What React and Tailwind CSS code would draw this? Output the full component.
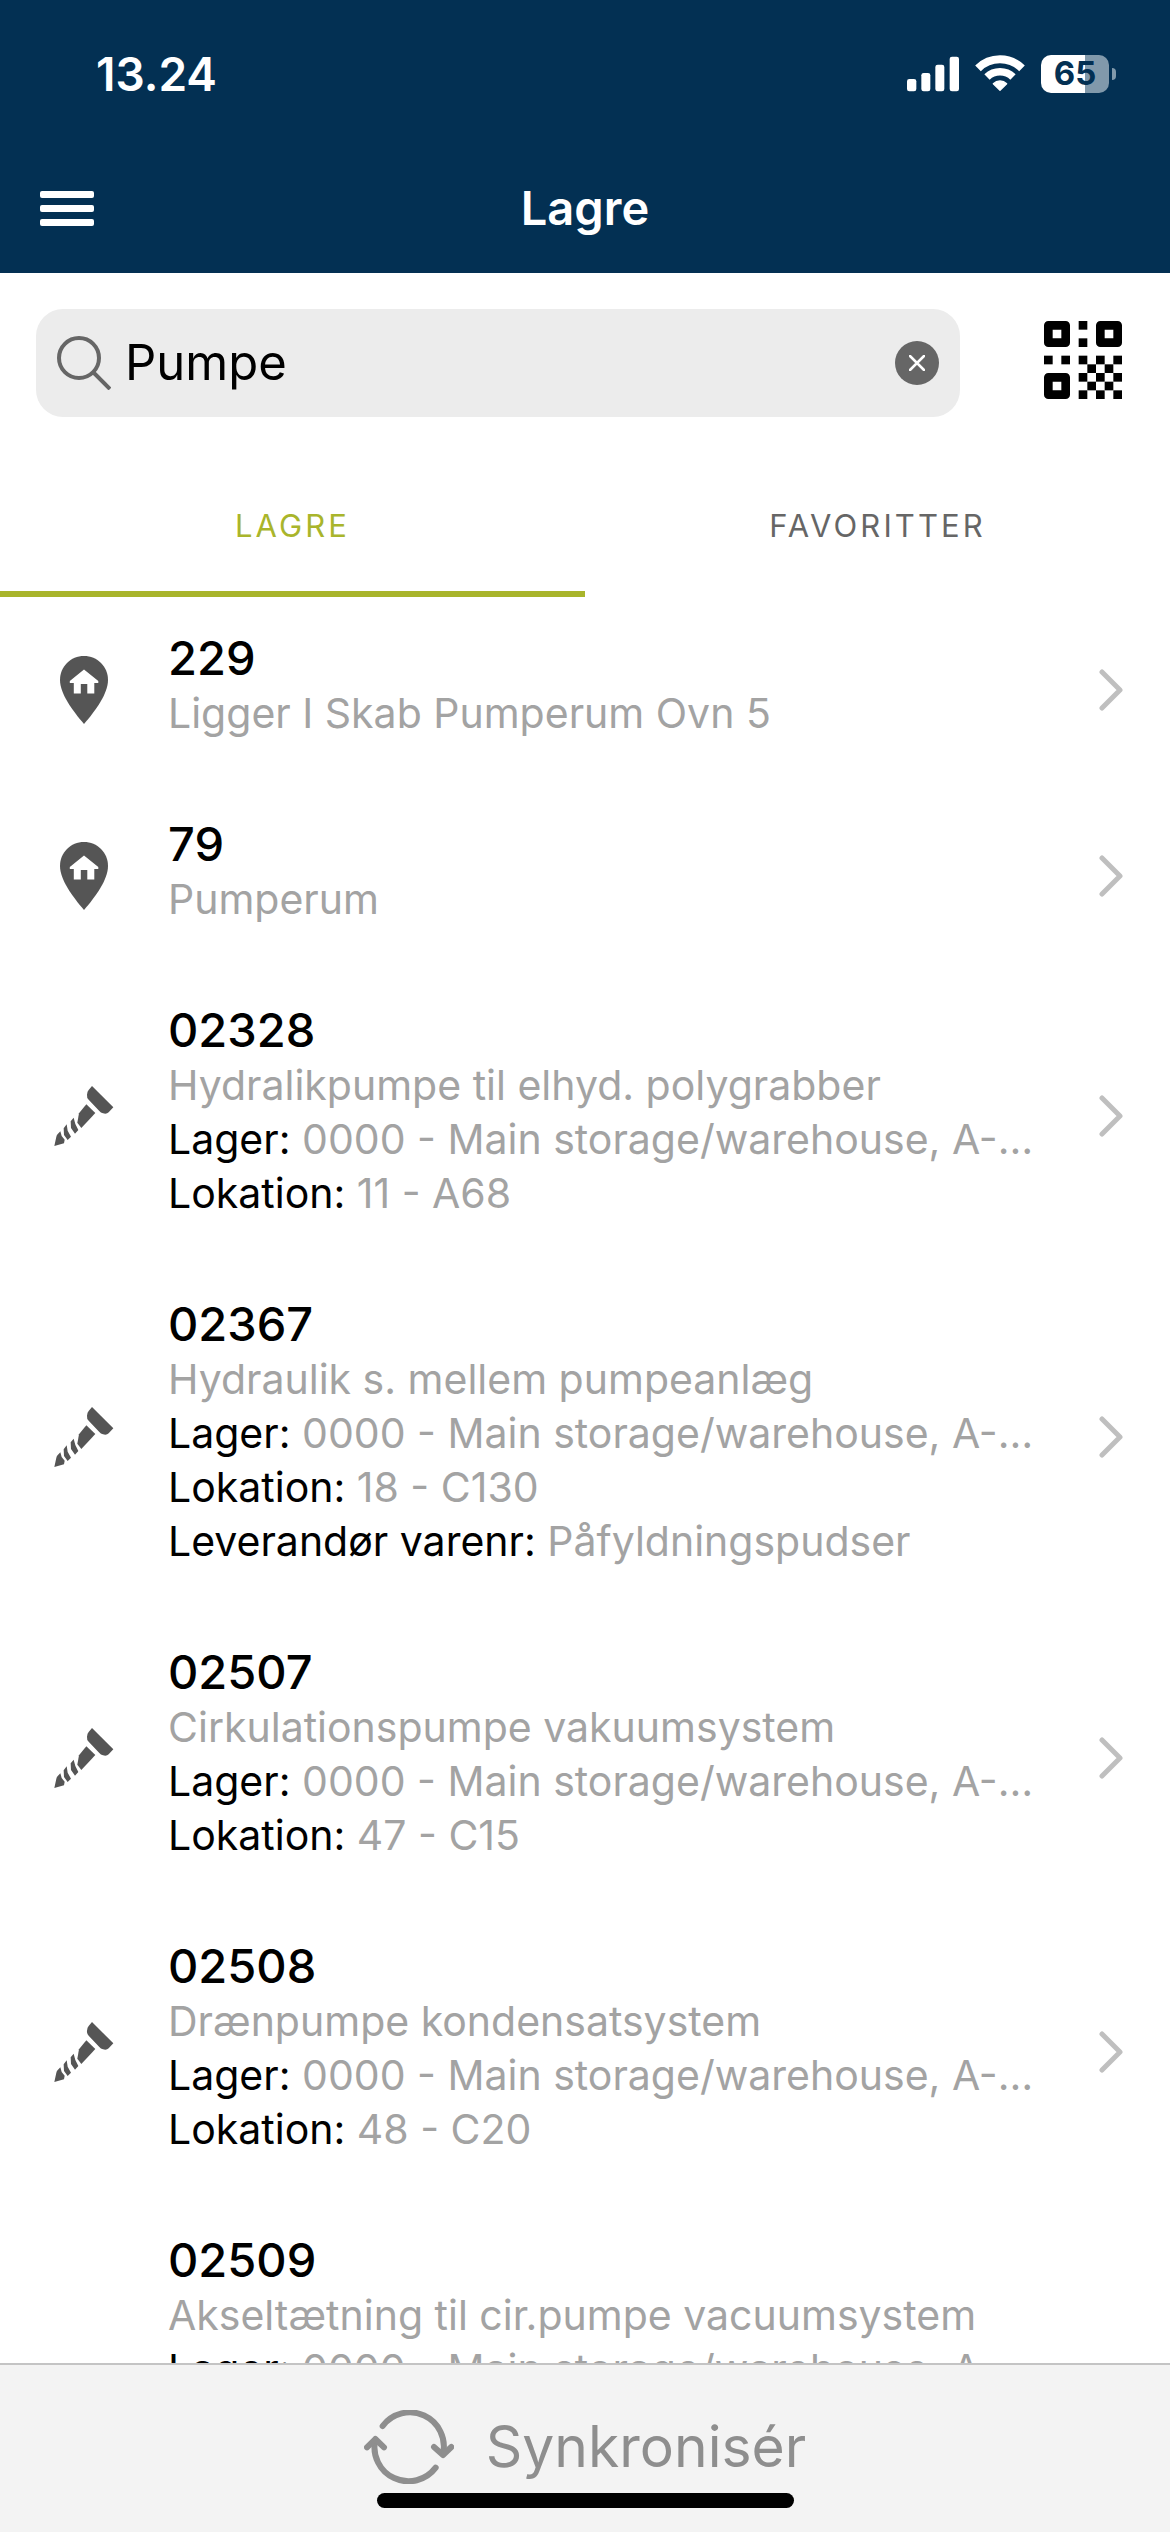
import React, { useState } from 'react';
import clsx from 'clsx';

const STORAGE = '0000 - Main storage/warehouse, A-Hovedlager';

const results = [
  { id: '229', kind: 'place', name: 'Ligger I Skab Pumperum Ovn 5' },
  { id: '79', kind: 'place', name: 'Pumperum' },
  {
    id: '02328',
    kind: 'part',
    name: 'Hydralikpumpe til elhyd. polygrabber',
    fields: [['Lager', STORAGE], ['Lokation', '11 - A68']],
  },
  {
    id: '02367',
    kind: 'part',
    name: 'Hydraulik s. mellem pumpeanlæg',
    fields: [['Lager', STORAGE], ['Lokation', '18 - C130'], ['Leverandør varenr', 'Påfyldningspudser']],
  },
  {
    id: '02507',
    kind: 'part',
    name: 'Cirkulationspumpe vakuumsystem',
    fields: [['Lager', STORAGE], ['Lokation', '47 - C15']],
  },
  {
    id: '02508',
    kind: 'part',
    name: 'Drænpumpe kondensatsystem',
    fields: [['Lager', STORAGE], ['Lokation', '48 - C20']],
  },
  {
    id: '02509',
    kind: 'part',
    name: 'Akseltætning til cir.pumpe vacuumsystem',
    fields: [['Lager', STORAGE], ['Lokation', '49 - C21'], ['Leverandør varenr', '4021'], ['Antal', '2']],
  },
];

function SignalIcon() {
  return (
    <svg viewBox="140 75 156 114" className="h-[38px] w-[52px]" fill="currentColor" aria-hidden="true">
      <rect x="140" y="147" width="28" height="37" rx="7" />
      <rect x="183" y="129" width="27" height="55" rx="7" />
      <rect x="225" y="104" width="27" height="80" rx="7" />
      <rect x="268" y="80" width="28" height="104" rx="7" />
    </svg>
  );
}

function WifiIcon() {
  return (
    <svg viewBox="342 75 150 114" className="h-[38px] w-[50px]" fill="none" stroke="currentColor" aria-hidden="true">
      <path d="M351 115a94 94 0 0 1 132 0" strokeWidth="24" />
      <path d="M378 141a56 56 0 0 1 78 0" strokeWidth="23" />
      <path d="M397 161a29 29 0 0 1 40 0l-20 20z" fill="currentColor" strokeWidth="4" strokeLinejoin="round" />
    </svg>
  );
}

function MenuIcon() {
  return (
    <svg viewBox="0 0 54 36" className="h-9 w-[54px]" fill="currentColor" aria-hidden="true">
      <rect y="0" width="54" height="7" rx="2" />
      <rect y="14" width="54" height="7" rx="2" />
      <rect y="28" width="54" height="7" rx="2" />
    </svg>
  );
}

function SearchIcon() {
  return (
    <svg viewBox="0 0 54 54" className="size-[54px] shrink-0" fill="none" stroke="#666" strokeWidth="4" aria-hidden="true">
      <circle cx="22" cy="22" r="20" />
      <path d="M36 36l17 17" />
    </svg>
  );
}

function QrIcon() {
  const dots = [
    [4, 0], [4, 2], [0, 4], [2, 4],
    [4, 4], [6, 4], [8, 4], [5, 5], [7, 5], [4, 6], [6, 6], [8, 6], [5, 7], [7, 7], [4, 8], [6, 8], [8, 8],
  ];
  return (
    <svg viewBox="0 0 9 9" className="size-[78px]" fill="currentColor" aria-hidden="true">
      {[[0, 0], [6, 0], [0, 6]].map(([x, y]) => (
        <rect key={`${x}-${y}`} x={x + 0.5} y={y + 0.5} width="2" height="2" fill="none" stroke="currentColor" strokeWidth="1" strokeLinejoin="round" />
      ))}
      {dots.map(([x, y]) => (
        <rect key={`${x}-${y}`} x={x} y={y} width="1" height="1" />
      ))}
    </svg>
  );
}

function PlaceIcon() {
  return (
    <svg viewBox="0 0 48 68" className="h-[68px] w-12" fill="#555" aria-hidden="true">
      <path d="M24 0C10.7 0 0 10.6 0 24c0 13.500 12 30 24 44 12-14 24-30.500 24-44C48 10.600 37.300 0 24 0z" />
      <path d="M24 13.500L9.800 25v2h4v10.500h7V28h6.500v9.500h7V27h4v-2z" fill="#fff" />
    </svg>
  );
}

function PartIcon() {
  return (
    <svg viewBox="6 6 180 180" className="size-[60px]" fill="#555" aria-hidden="true">
      <path d="M120 6L184 70L170 85Q164 91 153 88Q146 86 142 81L110 47Q104 41 105 32Q106 22 110 18z" />
      <path d="M103 61L130 87L88 132L76 116L81 88z" />
      <path d="M56 112L65 101L70 120L79 138L69 149L57 132z" />
      <path d="M35 133L44 121L47 140L57 158L47 168L36 153z" />
      <path d="M25 142L29 156L38 167L36 178L7 186L13 158Q14 152 18 149z" />
    </svg>
  );
}

function ChevronIcon() {
  return (
    <svg viewBox="0 0 24 42" className="h-[42px] w-6 shrink-0" fill="none" stroke="#bfbfbf" strokeWidth="5" strokeLinecap="round" strokeLinejoin="round" aria-hidden="true">
      <path d="M3 3l18 18L3 39" />
    </svg>
  );
}

function SyncIcon() {
  return (
    <svg viewBox="48 33 270 222" className="h-[74px] w-[90px]" fill="none" stroke="currentColor" strokeWidth="18" strokeLinecap="round" strokeLinejoin="round" aria-hidden="true">
      <path d="M104 81A102 102 0 0 1 285 165" />
      <path d="M258 144L285 168L310 144" />
      <path d="M263 206A102 102 0 0 1 82 122" />
      <path d="M57 145L82 120L108 145" />
    </svg>
  );
}

function ResultRow({ item }) {
  return (
    <li>
      <button type="button" className="flex w-full items-center pr-[47px] pl-[54px] text-left">
        <span className="flex w-[60px] shrink-0 justify-center">
          {item.kind === 'place' ? <PlaceIcon /> : <PartIcon />}
        </span>
        <span className="ml-[54px] min-w-0 flex-1 pt-[33px] pb-[43px] text-[41px] leading-[54px] text-[#a3a3a3]">
          <span className="block text-[47px] leading-[56px] font-medium text-black">{item.id}</span>
          <span className="block truncate">{item.name}</span>
          {(item.fields || []).map(([label, value]) => (
            <span key={label} className="block truncate">
              <span className="text-black">{label}:</span> {value}
            </span>
          ))}
        </span>
        <span className="ml-14 flex">
          <ChevronIcon />
        </span>
      </button>
    </li>
  );
}

export default function App() {
  const [query, setQuery] = useState('Pumpe');
  const [tab, setTab] = useState('Lagre');

  return (
    <div className="flex h-screen flex-col overflow-hidden bg-white font-['Inter',sans-serif] text-black">
      <header className="shrink-0 bg-[#033053] text-white">
        <div className="flex h-[148px] items-center justify-between pr-[54px] pl-24">
          <span className="text-[46px] font-semibold">13.24</span>
          <div className="flex items-center gap-4">
            <SignalIcon />
            <WifiIcon />
            <div className="flex items-center gap-[3px]">
              <span className="flex h-[38px] w-[68px] items-center justify-center rounded-[10px] bg-[linear-gradient(to_right,#fff_65%,#8199ab_65%)] text-[33px] font-bold text-[#033053]">
                65
              </span>
              <span className="h-3 w-1 rounded-r-full bg-[#8199ab]" />
            </div>
          </div>
        </div>
        <div className="grid h-[125px] grid-cols-[1fr_auto_1fr] items-center px-10 pb-1">
          <button type="button" aria-label="Menu" className="justify-self-start">
            <MenuIcon />
          </button>
          <h1 className="text-[47px] font-semibold">Lagre</h1>
        </div>
      </header>

      <div className="flex shrink-0 items-start gap-[84px] py-9 pr-12 pl-9">
        <div className="flex h-[108px] min-w-0 flex-1 items-center rounded-[27px] bg-[#ececec] px-[21px]">
          <SearchIcon />
          <input
            type="text"
            aria-label="Søg"
            value={query}
            onChange={e => setQuery(e.target.value)}
            className="ml-3.5 min-w-0 flex-1 bg-transparent text-[49px] outline-none"
          />
          <button
            type="button"
            aria-label="Ryd"
            onClick={() => setQuery('')}
            className="flex size-11 items-center justify-center rounded-full bg-[#666]"
          >
            <svg viewBox="0 0 16 16" className="size-4" stroke="#fff" strokeWidth="2.500" strokeLinecap="round" aria-hidden="true">
              <path d="M1 1l14 14M15 1L1 15" />
            </svg>
          </button>
        </div>
        <button type="button" aria-label="Scan kode" className="pt-3">
          <QrIcon />
        </button>
      </div>

      <div role="tablist" className="grid h-36 shrink-0 grid-cols-2">
        {['Lagre', 'Favoritter'].map(name => (
          <button
            key={name}
            type="button"
            role="tab"
            aria-selected={tab === name}
            onClick={() => setTab(name)}
            className={clsx(
              'pt-0.5 text-[31px] tracking-widest uppercase',
              tab === name ? 'text-[#a9b52b] shadow-[inset_0_-6px_0_#a9b52b]' : 'text-[#666]'
            )}
          >
            {name}
          </button>
        ))}
      </div>

      <ul className="min-h-0 flex-1 overflow-hidden">
        {results.map(item => (
          <ResultRow key={item.id} item={item} />
        ))}
      </ul>

      <footer className="flex shrink-0 flex-col items-center border-t-2 border-[#c4c4c4] bg-[#f3f3f3] pt-11 pb-6">
        <button type="button" className="flex items-center gap-8 text-[57px] leading-[76px] text-[#8e8e8e]">
          <SyncIcon />
          Synkronisér
        </button>
        <span className="mt-2 h-[15px] w-[417px] rounded-full bg-black" />
      </footer>
    </div>
  );
}
